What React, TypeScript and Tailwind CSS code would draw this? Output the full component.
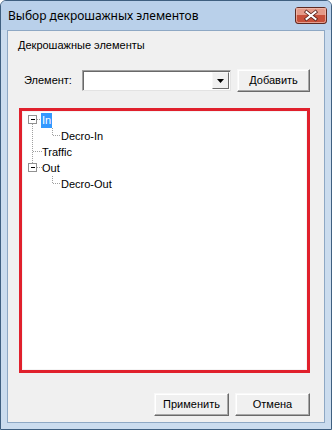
const ui = { fontFamily: '"Liberation Sans", Arial, sans-serif' };
const title = { fontFamily: '"Noto Sans", "Open Sans", sans-serif' };

type Node = { label: string; level: number; selected?: boolean };

const nodes: Node[] = [
  { label: "In", level: 0, selected: true },
  { label: "Decro-In", level: 1 },
  { label: "Traffic", level: 0 },
  { label: "Out", level: 0 },
  { label: "Decro-Out", level: 1 },
];

function ClassicButton({ children, width }: { children: React.ReactNode; width: string }) {
  return (
    <button
      className={`${width} h-[23px] flex items-center justify-center bg-[#f0f0f0] text-[11px] text-black border border-t-[#f8f8f8] border-l-[#f8f8f8] border-b-[#6a6a6a] border-r-[#6a6a6a] shadow-[inset_-1px_-1px_0_#a8a8a8,inset_1px_1px_0_#ffffff]`}
    >
      {children}
    </button>
  );
}

function TreeLines() {
  // dotted connector lines, coordinates relative to the tree's content box
  const dot = { stroke: "#a0a0a0", strokeWidth: 1, strokeDasharray: "1 1" };
  return (
    <svg className="absolute left-0 top-0" width="120" height="90" shapeRendering="crispEdges">
      <line x1="9.5" y1="12" x2="9.5" y2="52" {...dot} />
      <line x1="14" y1="7.5" x2="19" y2="7.5" {...dot} />
      <line x1="10" y1="39.5" x2="19" y2="39.5" {...dot} />
      <line x1="14" y1="55.5" x2="19" y2="55.5" {...dot} />
      <line x1="29.5" y1="16" x2="29.5" y2="23" {...dot} />
      <line x1="30" y1="23.5" x2="37" y2="23.5" {...dot} />
      <line x1="29.5" y1="64" x2="29.5" y2="71" {...dot} />
      <line x1="30" y1="71.5" x2="37" y2="71.5" {...dot} />
      <rect x="5.5" y="3.5" width="8" height="8" fill="#fff" stroke="#919191" />
      <line x1="7.5" y1="7.5" x2="11.5" y2="7.5" stroke="#000" />
      <rect x="5.5" y="51.5" width="8" height="8" fill="#fff" stroke="#919191" />
      <line x1="7.5" y1="55.5" x2="11.5" y2="55.5" stroke="#000" />
    </svg>
  );
}

function CloseButton() {
  return (
    <div className="w-[32px] h-[17px] -mt-[1px] flex items-center justify-center rounded-[3px] border border-[#5e2a22] bg-[#c7503a]">
      <svg width="30" height="15" viewBox="0 0 30 15">
        <rect x="0" y="0" width="30" height="7" fill="#e49a88" />
        <rect x="0.5" y="0.5" width="29" height="14" rx="2" fill="none" stroke="#f2c2b6" strokeOpacity="0.7" />
        <path d="M10.5 4 L19.5 11 M19.5 4 L10.5 11" stroke="#5a241c" strokeWidth="3.6" strokeLinecap="square" />
        <path d="M10.5 4 L19.5 11 M19.5 4 L10.5 11" stroke="#ffffff" strokeWidth="2" strokeLinecap="square" />
      </svg>
    </div>
  );
}

export default function App() {
  return (
    <div
      className="w-[332px] h-[430px] flex flex-col bg-[#cbdcee] border border-[#3f5f80] rounded-t-[6px]"
      style={ui}
    >
      <div className="h-[29px] flex items-center justify-between pl-[7px] pr-[4px] bg-[#b9d0ea] rounded-t-[5px]">
        <span className="text-[12px] text-black" style={title}>
          Выбор декрошажных элементов
        </span>
        <CloseButton />
      </div>

      <div className="flex-1 mx-[6px] mb-[6px] bg-[#f0f0f0] border border-[#8ea8c4] flex flex-col pl-[10px] pr-[14px] pt-[8px] pb-[6px]">
        <div className="text-[11px] text-black leading-[13px]">Декрошажные элементы</div>

        <div className="mt-[17px] flex items-center">
          <span className="ml-[6px] w-[58px] text-[11px] text-black">Элемент:</span>
          <div className="w-[150px] h-[21px] flex items-stretch bg-white border border-t-[#a0a0a0] border-l-[#a0a0a0] border-b-[#e3e3e3] border-r-[#e3e3e3] shadow-[inset_1px_1px_0_#696969]">
            <div className="flex-1" />
            <div className="w-[17px] my-[1px] mr-[1px] flex items-center justify-center bg-[#f0f0f0] border border-t-[#f8f8f8] border-l-[#f8f8f8] border-b-[#6a6a6a] border-r-[#6a6a6a]">
              <svg width="7" height="4" viewBox="0 0 7 4">
                <path d="M0 0 H7 L3.5 4 Z" fill="#000" />
              </svg>
            </div>
          </div>
          <div className="ml-[6px]">
            <ClassicButton width="w-[73px]">Добавить</ClassicButton>
          </div>
        </div>

        <div className="mt-[16px] ml-[1px] h-[265px] border-[3px] border-[#e0202c] bg-white">
          <div className="relative h-full border border-[#f4f4f4] pl-[4px]">
            <TreeLines />
            <div className="relative flex flex-col">
              {nodes.map((n) => (
                <div
                  key={n.label}
                  className={`h-[16px] flex items-center ${n.level === 0 ? "pl-[14px]" : "pl-[33px]"}`}
                >
                  <span
                    className={`px-[1px] text-[11px] leading-[15px] ${n.selected ? "bg-[#3399ff] text-white" : "text-black"}`}
                  >
                    {n.label}
                  </span>
                </div>
              ))}
            </div>
          </div>
        </div>

        <div className="mt-auto flex justify-end gap-[6px]">
          <ClassicButton width="w-[75px]">Применить</ClassicButton>
          <ClassicButton width="w-[75px]">Отмена</ClassicButton>
        </div>
      </div>
    </div>
  );
}
